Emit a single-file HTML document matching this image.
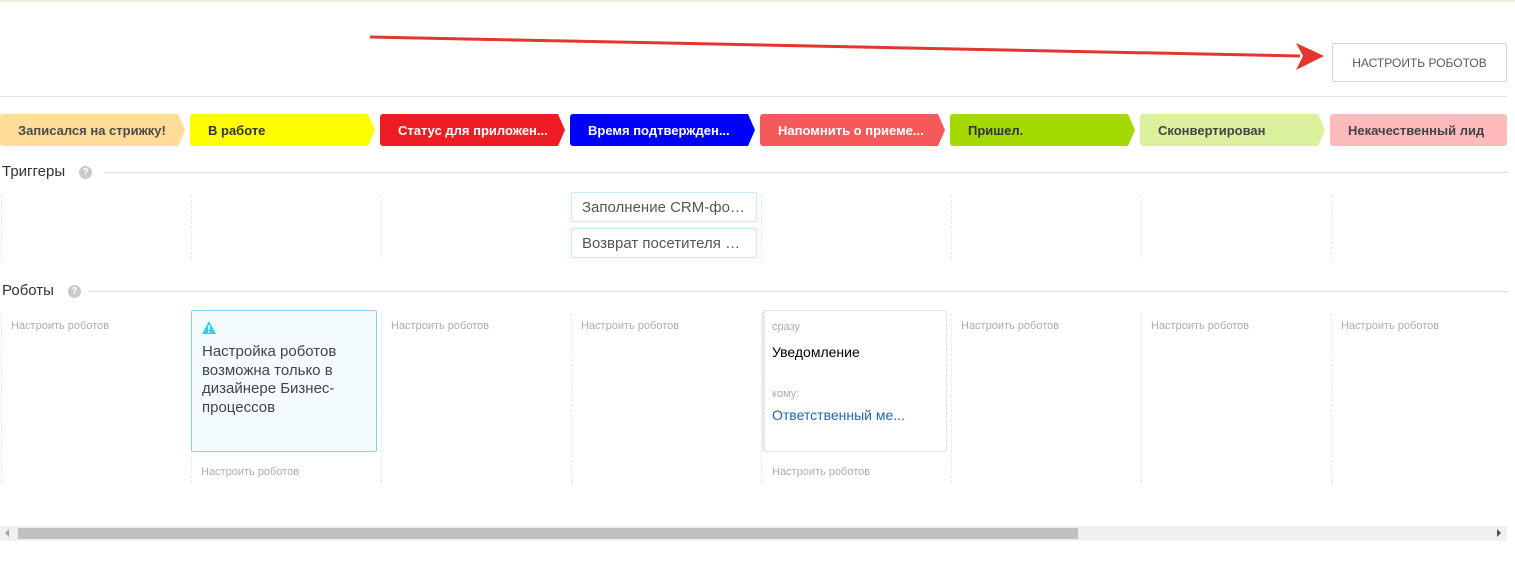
<!DOCTYPE html>
<html><head><meta charset="utf-8"><style>
*{margin:0;padding:0;box-sizing:border-box}
body{width:1515px;height:568px;background:#fff;position:relative;overflow:hidden;font-family:"Liberation Sans",sans-serif}
.a{position:absolute}
.st{position:absolute;top:114px;height:32px;font-size:13px;font-weight:bold;line-height:33px;padding-left:18px;white-space:nowrap;clip-path:polygon(0 0,calc(100% - 7px) 0,100% 50%,calc(100% - 7px) 100%,0 100%);border-radius:3px}
.sec{position:absolute;left:2px;font-size:15px;color:#333}
.q{display:inline-block;width:13px;height:13px;border-radius:50%;background:#c8cbce;color:#fff;font-size:10px;text-align:center;line-height:13px;font-weight:bold;vertical-align:middle;margin-left:14px}
.hl{position:absolute;height:1px;background:#dfe0e2}
.vl{position:absolute;width:0;border-left:1px dashed #e8e8e8}
.nr{position:absolute;font-size:11px;color:#a8adb4}
.tr{position:absolute;left:571px;width:186px;height:30px;border:1px solid #c8eaf2;border-radius:2px;font-size:15px;color:#555;padding-left:10px;line-height:30px;white-space:nowrap;overflow:hidden}
</style></head><body>
<div class="a" style="left:0;top:0;width:1515px;height:2px;background:#f3f1e4"></div>
<svg class="a" style="left:0;top:0" width="1515" height="100"><line x1="370" y1="37" x2="1300" y2="56" stroke="#e0372f" stroke-width="3"/><polygon points="1296,43 1324,56 1296,70 1303,56" fill="#e0372f"/></svg>
<div class="a" style="left:1332px;top:43px;width:175px;height:39px;border:1px solid #d5d7da;border-radius:2px;font-size:12px;color:#535c69;text-align:center;line-height:38px">НАСТРОИТЬ РОБОТОВ</div>
<div class="hl" style="left:0;top:96px;width:1507px"></div>

<div class="st" style="left:0;width:185px;background:#ffdc97;color:#4b4b4b">Записался на стрижку!</div>
<div class="st" style="left:190px;width:185px;background:#ffff00;color:#333">В работе</div>
<div class="st" style="left:380px;width:185px;background:#ee1d23;color:#fff">Статус для приложен...</div>
<div class="st" style="left:570px;width:185px;background:#0000ff;color:#fff">Время подтвержден...</div>
<div class="st" style="left:760px;width:185px;background:#f65959;color:#fff">Напомнить о приеме...</div>
<div class="st" style="left:950px;width:185px;background:#a3d900;color:#333">Пришел.</div>
<div class="st" style="left:1140px;width:185px;background:#dbf09d;color:#444">Сконвертирован</div>
<div class="st" style="left:1330px;width:177px;background:#ffbbbb;color:#444;clip-path:none">Некачественный лид</div>

<div class="sec" style="top:163px">Триггеры<span class="q">?</span></div>
<div class="hl" style="left:104px;top:172px;width:1403px"></div>
<div class="vl" style="left:1px;top:195px;height:65px"></div>
<div class="vl" style="left:191px;top:195px;height:65px"></div>
<div class="vl" style="left:381px;top:195px;height:65px"></div>
<div class="vl" style="left:761px;top:195px;height:65px"></div>
<div class="vl" style="left:951px;top:195px;height:65px"></div>
<div class="vl" style="left:1141px;top:195px;height:65px"></div>
<div class="vl" style="left:1331px;top:195px;height:65px"></div>
<div class="tr" style="top:192px">Заполнение CRM-фо…</div>
<div class="tr" style="top:228px">Возврат посетителя …</div>

<div class="sec" style="top:282px">Роботы<span class="q">?</span></div>
<div class="hl" style="left:88px;top:291px;width:1419px"></div>
<div class="vl" style="left:1px;top:313px;height:170px"></div>
<div class="vl" style="left:191px;top:313px;height:170px"></div>
<div class="vl" style="left:381px;top:313px;height:170px"></div>
<div class="vl" style="left:571px;top:313px;height:170px"></div>
<div class="vl" style="left:761px;top:313px;height:170px"></div>
<div class="vl" style="left:951px;top:313px;height:170px"></div>
<div class="vl" style="left:1141px;top:313px;height:170px"></div>
<div class="vl" style="left:1331px;top:313px;height:170px"></div>
<div class="nr" style="left:11px;top:320px">Настроить роботов</div>
<div class="nr" style="left:391px;top:320px">Настроить роботов</div>
<div class="nr" style="left:581px;top:320px">Настроить роботов</div>
<div class="nr" style="left:961px;top:320px">Настроить роботов</div>
<div class="nr" style="left:1151px;top:320px">Настроить роботов</div>
<div class="nr" style="left:1341px;top:320px">Настроить роботов</div>
<div class="nr" style="left:201px;top:466px">Настроить роботов</div>
<div class="nr" style="left:772px;top:466px">Настроить роботов</div>

<div class="a" style="left:191px;top:310px;width:186px;height:142px;background:#f4fcfe;border:1px solid #7fd3e9;border-radius:2px"></div>
<svg class="a" style="left:202px;top:321px" width="14" height="13"><polygon points="7,0 14,13 0,13" fill="#3bc8f5"/><rect x="6.2" y="4" width="1.6" height="5" fill="#fff"/><rect x="6.2" y="10" width="1.6" height="1.6" fill="#fff"/></svg>
<div class="a" style="left:202px;top:343px;width:170px;font-size:15px;line-height:18.5px;color:#444">Настройка роботов возможна только в дизайнере Бизнес-процессов</div>

<div class="a" style="left:762px;top:310px;width:185px;height:142px;background:#fff;border:1px solid #e0e2e4;border-left:3px solid #e6e7e9;border-radius:3px"></div>
<div class="a" style="left:772px;top:321px;font-size:11px;color:#a8adb4">сразу</div>
<div class="a" style="left:772px;top:344px;font-size:14px;color:#000">Уведомление</div>
<div class="a" style="left:772px;top:388px;font-size:11px;color:#a8adb4">кому:</div>
<div class="a" style="left:772px;top:407px;font-size:14px;color:#2067b0">Ответственный ме...</div>

<div class="a" style="left:0;top:526px;width:1507px;height:15px;background:#f0f0f0"></div>
<div class="a" style="left:18px;top:528px;width:1060px;height:11px;background:#c1c1c1"></div>
<div class="a" style="left:5px;top:529px;width:0;height:0;border-top:4px solid transparent;border-bottom:4px solid transparent;border-right:4px solid #a3a3a3"></div>
<div class="a" style="left:1497px;top:529px;width:0;height:0;border-top:4px solid transparent;border-bottom:4px solid transparent;border-left:4px solid #505050"></div>
</body></html>
